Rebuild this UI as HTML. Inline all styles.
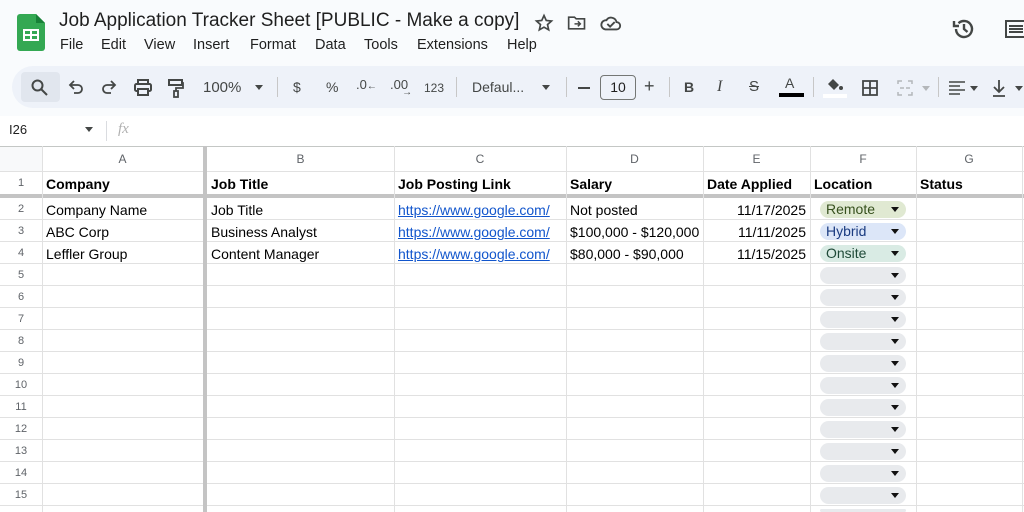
<!DOCTYPE html>
<html style="overflow:hidden;width:1024px;height:512px"><head><meta charset="utf-8"><style>
*{margin:0;padding:0;box-sizing:border-box}
body{width:1024px;height:512px;overflow:hidden;background:#f9fbfd;font-family:"Liberation Sans",Arial,sans-serif;position:relative;color:#1f1f1f}
.a{position:absolute}
.t{font-size:14px;white-space:nowrap}
.ic{position:absolute;color:#444746}
.m{position:absolute;top:37px;font-size:14.5px;color:#1f1f1f}
.hl{position:absolute;left:0;width:1024px;height:1px;background:#e1e1e1}
.vl{position:absolute;width:1px;background:#e1e1e1;top:146px;height:366px}
.ch{position:absolute;top:152px;font-size:12px;color:#5f6368;text-align:center}
.rn{position:absolute;left:0;width:42px;text-align:center;font-size:11px;color:#5f6368}
.c{position:absolute;font-size:14px;white-space:nowrap;color:#000}
.chip{position:absolute;left:820px;width:86px;height:17px;border-radius:9px;background:#e8eaed;font-size:14px;padding-left:6px;line-height:17px}
.chip:after{content:"";position:absolute;right:7px;top:6px;border-left:4px solid transparent;border-right:4px solid transparent;border-top:5px solid #111}
</style></head><body>
<svg class="a" style="left:17px;top:14px" width="28" height="37" viewBox="0 0 28 37"><path d="M3 0h16l9 9v25a3 3 0 0 1-3 3H3a3 3 0 0 1-3-3V3a3 3 0 0 1 3-3z" fill="#34a853"/><path d="M19 0v9h9z" fill="#188038"/><rect x="6" y="15" width="16" height="12" fill="#fff"/><rect x="8" y="17" width="5" height="3" fill="#34a853"/><rect x="15" y="17" width="5" height="3" fill="#34a853"/><rect x="8" y="22" width="5" height="3" fill="#34a853"/><rect x="15" y="22" width="5" height="3" fill="#34a853"/></svg>
<div class="a" style="left:59px;top:10px;font-size:19px;color:#1f1f1f;white-space:nowrap">Job Application Tracker Sheet [PUBLIC - Make a copy]</div>
<div class="m" style="left:60px">File</div><div class="m" style="left:101px">Edit</div><div class="m" style="left:144px">View</div><div class="m" style="left:193px">Insert</div><div class="m" style="left:250px">Format</div><div class="m" style="left:315px">Data</div><div class="m" style="left:364px">Tools</div><div class="m" style="left:417px">Extensions</div><div class="m" style="left:507px">Help</div>
<svg class="a" style="left:534px;top:13px" width="20" height="20" viewBox="0 0 24 24"><path d="M12 3l2.7 6 6.3.6-4.8 4.3 1.4 6.3L12 17l-5.6 3.2 1.4-6.3L3 9.6 9.3 9z" fill="none" stroke="#444746" stroke-width="2"/></svg>
<svg class="a" style="left:567px;top:14px" width="20" height="18" viewBox="0 0 24 20"><path d="M2 3h7l2 2h10v12H2z" fill="none" stroke="#444746" stroke-width="2"/><path d="M9 11h7M13 8l3 3-3 3" fill="none" stroke="#444746" stroke-width="1.8"/></svg>
<svg class="a" style="left:600px;top:14px" width="22" height="18" viewBox="0 0 24 18"><path d="M6 16h12a4 4 0 0 0 0-8 6 6 0 0 0-11-2 5 5 0 0 0-1 10z" fill="none" stroke="#444746" stroke-width="2"/><path d="M8 10l3 3 5-5" fill="none" stroke="#444746" stroke-width="2"/></svg>
<svg class="a" style="left:952px;top:17px" width="24" height="24" viewBox="0 0 24 24"><path d="M4 12a8 8 0 1 0 2.5-5.8" fill="none" stroke="#444746" stroke-width="2.4"/><path d="M2 4v5h5" fill="none" stroke="#444746" stroke-width="2.4"/><path d="M12 7v5l3.5 3" fill="none" stroke="#444746" stroke-width="2.4"/></svg>
<svg class="a" style="left:1005px;top:19px" width="19" height="20" viewBox="0 0 19 20"><rect x="1" y="2" width="20" height="16" fill="none" stroke="#444746" stroke-width="2"/><path d="M4 7h14M4 10h14M4 13h14" stroke="#444746" stroke-width="2"/></svg>
<div class="a" style="left:12px;top:66px;width:1040px;height:42px;background:#eef2f9;border-radius:21px"></div>
<div class="a" style="left:21px;top:72px;width:39px;height:30px;background:#e1e6ee;border-radius:4px"></div>
<svg class="a" style="left:31px;top:79px" width="17" height="17" viewBox="0 0 17 17"><circle cx="6.5" cy="6.5" r="5" fill="none" stroke="#444746" stroke-width="2"/><path d="M10 10l6 6" stroke="#444746" stroke-width="2"/></svg>
<svg class="a" style="left:68px;top:80px" width="16" height="14" viewBox="0 0 16 14"><path d="M3 5h7a4 4 0 0 1 0 8H6M6 1L2 5l4 4" fill="none" stroke="#444746" stroke-width="1.8"/></svg>
<svg class="a" style="left:101px;top:80px" width="16" height="14" viewBox="0 0 16 14"><path d="M13 5H6a4 4 0 0 0 0 8h4M10 1l4 4-4 4" fill="none" stroke="#444746" stroke-width="1.8"/></svg>
<svg class="a" style="left:134px;top:79px" width="18" height="17" viewBox="0 0 18 17"><rect x="1" y="5" width="16" height="7" rx="1.5" fill="none" stroke="#444746" stroke-width="2"/><rect x="4" y="1" width="10" height="4" fill="none" stroke="#444746" stroke-width="2"/><rect x="4" y="10" width="10" height="6" fill="#eef2f9" stroke="#444746" stroke-width="2"/></svg>
<svg class="a" style="left:168px;top:79px" width="16" height="19" viewBox="0 0 16 19"><rect x="1" y="1" width="13" height="5" fill="none" stroke="#444746" stroke-width="2"/><path d="M14 4h1v5H8v3" fill="none" stroke="#444746" stroke-width="1.8"/><rect x="6" y="12" width="4" height="6" fill="none" stroke="#444746" stroke-width="1.8"/></svg>
<div class="ic t" style="left:203px;top:79px;font-size:15px">100%</div>
<div class="a" style="left:255px;top:85px;border-left:4px solid transparent;border-right:4px solid transparent;border-top:5px solid #444746"></div>
<div class="a" style="left:277px;top:77px;width:1px;height:20px;background:#c7c7c7"></div>
<div class="ic t" style="left:293px;top:79px">$</div>
<div class="ic t" style="left:326px;top:79px">%</div>
<div class="ic t" style="left:356px;top:77px;font-size:13px">.0<span style="font-size:10px">←</span></div>
<div class="ic t" style="left:390px;top:77px;font-size:13px">.00<span style="font-size:10px;margin-left:-6px;position:relative;top:6px">→</span></div>
<div class="ic t" style="left:424px;top:81px;font-size:12px">123</div>
<div class="a" style="left:456px;top:77px;width:1px;height:20px;background:#c7c7c7"></div>
<div class="ic t" style="left:472px;top:79px">Defaul...</div>
<div class="a" style="left:542px;top:85px;border-left:4px solid transparent;border-right:4px solid transparent;border-top:5px solid #444746"></div>
<div class="a" style="left:566px;top:77px;width:1px;height:20px;background:#c7c7c7"></div>
<div class="a" style="left:578px;top:87px;width:12px;height:1.5px;background:#444746"></div>
<div class="a" style="left:600px;top:75px;width:36px;height:25px;border:1px solid #747775;border-radius:4px;font-size:14px;text-align:center;line-height:23px;color:#1f1f1f">10</div>
<div class="ic t" style="left:644px;top:76px;font-size:18px">+</div>
<div class="a" style="left:669px;top:77px;width:1px;height:20px;background:#c7c7c7"></div>
<div class="ic t" style="left:684px;top:79px;font-weight:bold">B</div>
<div class="ic t" style="left:717px;top:78px;font-size:16px;font-family:'Liberation Serif',serif;font-style:italic">I</div>
<div class="ic t" style="left:749px;top:78px;font-size:15px;text-decoration:line-through">S</div>
<div class="ic t" style="left:785px;top:75px;font-size:14px">A</div>
<div class="a" style="left:779px;top:93px;width:25px;height:4px;background:#000"></div>
<div class="a" style="left:813px;top:77px;width:1px;height:20px;background:#c7c7c7"></div>
<svg class="a" style="left:825px;top:77px" width="20" height="16" viewBox="0 0 20 16"><path d="M8 2l6 6-5 5-6-6z" fill="#444746"/><circle cx="16" cy="11" r="2" fill="#444746"/></svg>
<div class="a" style="left:823px;top:94px;width:24px;height:4px;background:#fff"></div>
<svg class="a" style="left:862px;top:80px" width="16" height="16" viewBox="0 0 16 16"><rect x="1" y="1" width="14" height="14" fill="none" stroke="#444746" stroke-width="1.8"/><path d="M8 1v14M1 8h14" stroke="#444746" stroke-width="1.8"/></svg>
<svg class="a" style="left:897px;top:80px" width="16" height="16" viewBox="0 0 16 16"><path d="M1 4V1h4M1 12v3h4M15 4V1h-4M15 12v3h-4M3 8h4M13 8H9" fill="none" stroke="#b4b7ba" stroke-width="1.5"/></svg>
<div class="a" style="left:922px;top:86px;border-left:4px solid transparent;border-right:4px solid transparent;border-top:5px solid #b4b7ba"></div>
<div class="a" style="left:938px;top:77px;width:1px;height:20px;background:#c7c7c7"></div>
<svg class="a" style="left:949px;top:81px" width="16" height="14" viewBox="0 0 16 14"><path d="M0 1h16M0 5h11M0 9h16M0 13h11" stroke="#444746" stroke-width="1.6"/></svg>
<div class="a" style="left:970px;top:86px;border-left:4px solid transparent;border-right:4px solid transparent;border-top:5px solid #444746"></div>
<svg class="a" style="left:992px;top:79px" width="14" height="18" viewBox="0 0 14 18"><path d="M7 1v12M2 8l5 5 5-5M1 17h12" fill="none" stroke="#444746" stroke-width="1.8"/></svg>
<div class="a" style="left:1015px;top:86px;border-left:4px solid transparent;border-right:4px solid transparent;border-top:5px solid #444746"></div>
<div class="a" style="left:0;top:116px;width:1024px;height:30px;background:#fff"></div>
<div class="a t" style="left:9px;top:122px;font-size:13px">I26</div>
<div class="a" style="left:85px;top:127px;border-left:4px solid transparent;border-right:4px solid transparent;border-top:5px solid #444746"></div>
<div class="a" style="left:106px;top:121px;width:1px;height:20px;background:#dadce0"></div>
<div class="a t" style="left:118px;top:121px;font-size:15px;font-style:italic;color:#b0b0b0;font-family:'Liberation Serif',serif">fx</div>
<div class="a" style="left:0;top:146px;width:1024px;height:366px;background:#fff;overflow:hidden">
<div class="a" style="left:0;top:0;width:42px;height:26px;background:#f8f9fa"></div>
<div class="a" style="left:0;top:52px;width:1024px;height:314px;background:repeating-linear-gradient(to bottom,transparent 0 21px,#e1e1e1 21px 22px)"></div>
</div>
<div class="hl" style="top:146px;background:#c4c7c5"></div>
<div class="hl" style="top:171px"></div>
<div class="hl" style="top:194px;height:4px;background:#c4c4c4"></div>
<div class="vl" style="left:42px"></div>
<div class="vl" style="left:203px;width:4px;background:#c4c4c4"></div>
<div class="vl" style="left:394px"></div>
<div class="vl" style="left:566px"></div>
<div class="vl" style="left:703px"></div>
<div class="vl" style="left:810px"></div>
<div class="vl" style="left:916px"></div>
<div class="vl" style="left:1022px"></div>
<div class="ch" style="left:42px;width:161px">A</div>
<div class="ch" style="left:207px;width:187px">B</div>
<div class="ch" style="left:394px;width:172px">C</div>
<div class="ch" style="left:566px;width:137px">D</div>
<div class="ch" style="left:703px;width:107px">E</div>
<div class="ch" style="left:810px;width:106px">F</div>
<div class="ch" style="left:916px;width:106px">G</div>
<div class="rn" style="top:177px">1</div>
<div class="rn" style="top:203px">2</div><div class="rn" style="top:225px">3</div><div class="rn" style="top:247px">4</div><div class="rn" style="top:269px">5</div><div class="rn" style="top:291px">6</div><div class="rn" style="top:313px">7</div><div class="rn" style="top:335px">8</div><div class="rn" style="top:357px">9</div><div class="rn" style="top:379px">10</div><div class="rn" style="top:401px">11</div><div class="rn" style="top:423px">12</div><div class="rn" style="top:445px">13</div><div class="rn" style="top:467px">14</div><div class="rn" style="top:489px">15</div>
<div class="c" style="left:46px;top:176px;font-weight:bold">Company</div>
<div class="c" style="left:211px;top:176px;font-weight:bold">Job Title</div>
<div class="c" style="left:398px;top:176px;font-weight:bold">Job Posting Link</div>
<div class="c" style="left:570px;top:176px;font-weight:bold">Salary</div>
<div class="c" style="left:707px;top:176px;font-weight:bold">Date Applied</div>
<div class="c" style="left:814px;top:176px;font-weight:bold">Location</div>
<div class="c" style="left:920px;top:176px;font-weight:bold">Status</div>
<div class="c" style="left:46px;top:202px">Company Name</div>
<div class="c" style="left:211px;top:202px">Job Title</div>
<div class="c" style="left:398px;top:202px;color:#1155cc;text-decoration:underline">https://www.google.com/</div>
<div class="c" style="left:570px;top:202px">Not posted</div>
<div class="c" style="left:707px;top:202px;width:99px;text-align:right">11/17/2025</div>
<div class="c" style="left:46px;top:224px">ABC Corp</div>
<div class="c" style="left:211px;top:224px">Business Analyst</div>
<div class="c" style="left:398px;top:224px;color:#1155cc;text-decoration:underline">https://www.google.com/</div>
<div class="c" style="left:570px;top:224px">$100,000 - $120,000</div>
<div class="c" style="left:707px;top:224px;width:99px;text-align:right">11/11/2025</div>
<div class="c" style="left:46px;top:246px">Leffler Group</div>
<div class="c" style="left:211px;top:246px">Content Manager</div>
<div class="c" style="left:398px;top:246px;color:#1155cc;text-decoration:underline">https://www.google.com/</div>
<div class="c" style="left:570px;top:246px">$80,000 - $90,000</div>
<div class="c" style="left:707px;top:246px;width:99px;text-align:right">11/15/2025</div>
<div class="chip" style="top:201px;background:#e0e9d2;color:#36501d">Remote</div>
<div class="chip" style="top:223px;background:#dce6f8;color:#1a3b80">Hybrid</div>
<div class="chip" style="top:245px;background:#d9ebe4;color:#1f4a38">Onsite</div>
<div class="chip" style="top:267px"></div><div class="chip" style="top:289px"></div><div class="chip" style="top:311px"></div><div class="chip" style="top:333px"></div><div class="chip" style="top:355px"></div><div class="chip" style="top:377px"></div><div class="chip" style="top:399px"></div><div class="chip" style="top:421px"></div><div class="chip" style="top:443px"></div><div class="chip" style="top:465px"></div><div class="chip" style="top:487px"></div><div class="chip" style="top:509px;height:3px"></div>
</body></html>
